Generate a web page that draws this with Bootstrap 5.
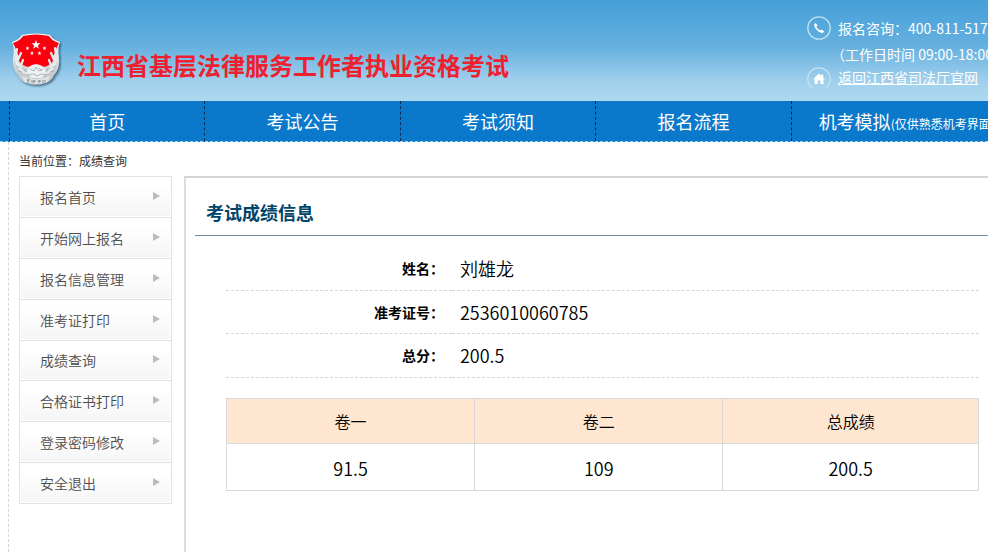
<!DOCTYPE html>
<html lang="zh-CN">
<head>
<meta charset="utf-8">
<meta name="viewport" content="width=device-width, initial-scale=1">
<title>成绩查询</title>
<link href="https://cdn.jsdelivr.net/npm/bootstrap@5.3.0/dist/css/bootstrap.min.css" rel="stylesheet">
<style>
body{font-family:"Noto Sans CJK SC","Liberation Sans",sans-serif;font-size:14px;line-height:20px;color:#000;overflow-x:hidden}
.site-head{min-height:101px;background:linear-gradient(#459fd9,#64b0df 45%,#a0cfec 80%,#addaef);padding-left:12px}
.emblem{width:50px;height:56px;margin-top:33px}
.site-title{font-size:24px;line-height:32px;font-weight:700;color:#ee1f2f;margin:49px 0 0 15px}
.contact{width:181px;color:#fff;padding-top:16px;white-space:nowrap}
.contact svg{width:24px;height:24px;margin-right:7px}
.contact-line{height:24px}
.contact-hours{height:27px;line-height:28px;padding-left:24px}
.contact-home{height:21px;overflow:hidden}
.site-nav{background:#0a78cb;padding:0 2px 0 9px;border-bottom:1px dashed #a9cfe9;min-height:41px}
.site-nav .nav-item{flex:1 1 0;min-width:0;border-left:1px dashed #032c55}
.site-nav .nav-link{color:#fff;font-size:18px;line-height:40px;padding:0;text-align:center;white-space:nowrap}
.site-nav .mock-link{text-align:left;padding-left:27px}
.mock-link small{font-size:12px;line-height:16px}
.page-body{margin-left:8px;border-left:1px dashed #d5d5d5;padding-left:10px}
.crumbs{font-size:12px;line-height:18px;color:#333;padding:10px 0 6px 0}
.side-menu{width:153px;min-height:328px;border-radius:0;margin-right:12px}
.side-menu .list-group-item{padding:0 11px 0 20px;color:#4d4d4d;font-size:14px;font-weight:350;border-color:#e2e2e2;background:linear-gradient(#fff 20%,#f5f5f5);box-shadow:inset 0 0 0 1px #fff}
.side-menu svg{width:8px;height:10px;margin-top:-2px}
.panel{min-width:0;border:solid #dcdcdc;border-width:2px 0 0 2px;padding-left:9px;border-top-color:#d4d4d4}
.panel-title{font-size:18px;line-height:28px;font-weight:700;color:#004469;padding:20px 0 9px 11px;border-bottom:1px solid #6b93ad;margin:0}
.panel-content{padding:10px 9px 0 31px}
.info-table th,.info-table td{height:44px;border-bottom:1px dashed #d5d5d5;padding:0;vertical-align:middle}
.info-table tr:nth-child(2) :is(th,td){height:43px}
.info-table th{width:30%;text-align:right;padding-right:8px;font-weight:700;font-size:14px}
.info-table td{padding-left:8px;font-size:18px;font-weight:350}
.score-table{margin-top:20px;text-align:center;table-layout:fixed}
.score-table th,.score-table td{border:1px solid #d9d9d9;padding:0}
.score-table th{width:33%;height:45px;background:#fee6d0;font-size:16px;font-weight:350}
.score-table th:last-child{width:34%}
.score-table td{height:47px;font-size:18px;font-weight:350;padding-top:2px}
</style>
<script src="https://cdn.jsdelivr.net/npm/bootstrap@5.3.0/dist/js/bootstrap.bundle.min.js"></script>
</head>
<body class="d-flex flex-column min-vh-100">
<header class="site-head d-flex align-items-start">
  <svg class="emblem flex-shrink-0" viewBox="0 0 50 56" role="img" aria-label="徽标">
    <defs><linearGradient id="silver" x2="0" y2="1"><stop stop-color="#fff"/><stop offset="1" stop-color="#b9bec2"/></linearGradient>
    <filter id="drop" x="-20%" y="-20%" width="150%" height="150%"><feDropShadow dx="1.5" dy="1.5" stdDeviation="1" flood-color="#14384f" flood-opacity=".7"/></filter></defs>
    <g filter="url(#drop)">
      <path d="M0 9Q7 7 10 2Q24-1 38 2Q41 7 48 9Q45 16 47 24Q48 36 42 42Q40 48 33 50Q24 53 15 50Q8 48 6 42Q0 36 1 24Q3 16 0 9Z" fill="url(#silver)"/>
      <path d="M1 10Q8 8 11 3Q24 0 37 3Q40 8 47 10Q43 17 41 28Q38 33 31 34H17Q10 33 7 28Q5 17 1 10Z" fill="#f80307"/>
    </g>
    <path d="M24 7l1.100 3.200 3.400.1-2.700 2.100 1 3.300-2.800-2-2.800 2 1-3.300-2.700-2.100 3.400-.1z" fill="#fff"/>
    <g fill="#ffe6e6"><path id="st" d="M15.500 13l.6 1.500 1.500.1-1.200 1 .4 1.500-1.300-.8-1.300.8.4-1.500-1.200-1 1.500-.1z"/><use href="#st" x="17"/><use href="#st" x="4.500" y="5"/><use href="#st" x="12" y="5"/></g>
    <g fill="none" stroke="#e7eaec" stroke-width="2.200" stroke-linecap="round"><path d="M5 16q-2 10 1 17 3 6 9 7M43 15q2 11-1 18-3 6-9 7"/><path d="M3 20l4 5m2-5l-3 7m-3 0l5 6m3-6l-3 8M45 20l-4 5m-2-5l3 7m3 0l-5 6m-3-6l3 8"/></g>
    <path d="M15 39q0-7 9-8 9 1 10 8l-4 6H19z" fill="#edf0f1"/>
    <path d="M18 36l4 2 2-4 3 4 4-2M16 42l6-1 3 2 4-2 5 1" fill="none" stroke="#a0a8ac" stroke-width=".8"/>
    <path d="M4 33l3 2m-1 3l4 1m2-3l2 3M44 33l-3 2m1 3l-4 1m-2-3l-2 3M27 35l3 3" stroke="#848d91" stroke-width=".6"/>
    <path d="M10 43q7 3 14 3t14-3l-2 6q-12 4-24 0z" fill="#e0e3e5"/>
    <path d="M16 46v4m-1-3h3m2 0v3m2-3v3m-1-2h3m3-1v3m-1-2h3m2-1v3m2-3v2" stroke="#7c8387" stroke-width=".9"/>
  </svg>
  <h1 class="site-title text-nowrap">江西省基层法律服务工作者执业资格考试</h1>
  <div class="contact ms-auto flex-shrink-0">
    <div class="contact-line d-flex align-items-center">
      <svg viewBox="0 0 24 24" aria-hidden="true"><circle cx="12" cy="12" r="11.200" fill="none" stroke="#c3e0f3" stroke-width="1.300"/><path d="M8.500 7L7 8.300C7 12 12 17 15.500 17.200l1.700-1.700-2.700-2-1.500 1C11.500 13.700 10 12 9.500 10.700l1-1.500z" fill="#fff"/></svg>
      <span>报名咨询：400-811-517</span>
    </div>
    <div class="contact-hours">（工作日时间 09:00-18:00</div>
    <div class="contact-home d-flex">
      <svg viewBox="0 0 24 24" aria-hidden="true"><circle cx="12" cy="12" r="11.200" fill="none" stroke="#c3e0f3" stroke-width="1.300"/><path d="M12 6.500L6 12.300h1.500V17h3.200v-3.500h2.600V17h3.200v-4.700H18l-1.800-1.800V7.500h-1.700v1.400z" fill="#fff"/></svg>
      <a class="text-white" href="#">返回江西省司法厅官网</a>
    </div>
  </div>
</header>
<nav class="site-nav" aria-label="主导航">
  <ul class="nav flex-nowrap">
    <li class="nav-item"><a class="nav-link" href="#">首页</a></li>
    <li class="nav-item"><a class="nav-link" href="#">考试公告</a></li>
    <li class="nav-item"><a class="nav-link" href="#">考试须知</a></li>
    <li class="nav-item"><a class="nav-link" href="#">报名流程</a></li>
    <li class="nav-item"><a class="nav-link mock-link" href="#">机考模拟<small>(仅供熟悉机考界面</small></a></li>
  </ul>
</nav>
<div class="page-body d-flex flex-column flex-grow-1">
  <div class="crumbs">当前位置：成绩查询</div>
  <div class="d-flex align-items-start flex-grow-1">
    <nav class="side-menu list-group flex-shrink-0" aria-label="报名菜单">
      <a class="list-group-item flex-fill d-flex align-items-center justify-content-between" href="#">报名首页<svg viewBox="0 0 8 10" aria-hidden="true"><path d="M1 1l7 4-7 4z" fill="#bbb"/></svg></a>
      <a class="list-group-item flex-fill d-flex align-items-center justify-content-between" href="#">开始网上报名<svg viewBox="0 0 8 10" aria-hidden="true"><path d="M1 1l7 4-7 4z" fill="#bbb"/></svg></a>
      <a class="list-group-item flex-fill d-flex align-items-center justify-content-between" href="#">报名信息管理<svg viewBox="0 0 8 10" aria-hidden="true"><path d="M1 1l7 4-7 4z" fill="#bbb"/></svg></a>
      <a class="list-group-item flex-fill d-flex align-items-center justify-content-between" href="#">准考证打印<svg viewBox="0 0 8 10" aria-hidden="true"><path d="M1 1l7 4-7 4z" fill="#bbb"/></svg></a>
      <a class="list-group-item flex-fill d-flex align-items-center justify-content-between" href="#">成绩查询<svg viewBox="0 0 8 10" aria-hidden="true"><path d="M1 1l7 4-7 4z" fill="#bbb"/></svg></a>
      <a class="list-group-item flex-fill d-flex align-items-center justify-content-between" href="#">合格证书打印<svg viewBox="0 0 8 10" aria-hidden="true"><path d="M1 1l7 4-7 4z" fill="#bbb"/></svg></a>
      <a class="list-group-item flex-fill d-flex align-items-center justify-content-between" href="#">登录密码修改<svg viewBox="0 0 8 10" aria-hidden="true"><path d="M1 1l7 4-7 4z" fill="#bbb"/></svg></a>
      <a class="list-group-item flex-fill d-flex align-items-center justify-content-between" href="#">安全退出<svg viewBox="0 0 8 10" aria-hidden="true"><path d="M1 1l7 4-7 4z" fill="#bbb"/></svg></a>
    </nav>
    <main class="panel flex-fill align-self-stretch">
      <h2 class="panel-title">考试成绩信息</h2>
      <div class="panel-content">
        <table class="info-table w-100">
          <tbody>
            <tr><th scope="row">姓名：</th><td>刘雄龙</td></tr>
            <tr><th scope="row">准考证号：</th><td>2536010060785</td></tr>
            <tr><th scope="row">总分：</th><td>200.5</td></tr>
          </tbody>
        </table>
        <table class="score-table w-100">
          <thead><tr><th scope="col">卷一</th><th scope="col">卷二</th><th scope="col">总成绩</th></tr></thead>
          <tbody><tr><td>91.5</td><td>109</td><td>200.5</td></tr></tbody>
        </table>
      </div>
    </main>
  </div>
</div>
</body>
</html>
